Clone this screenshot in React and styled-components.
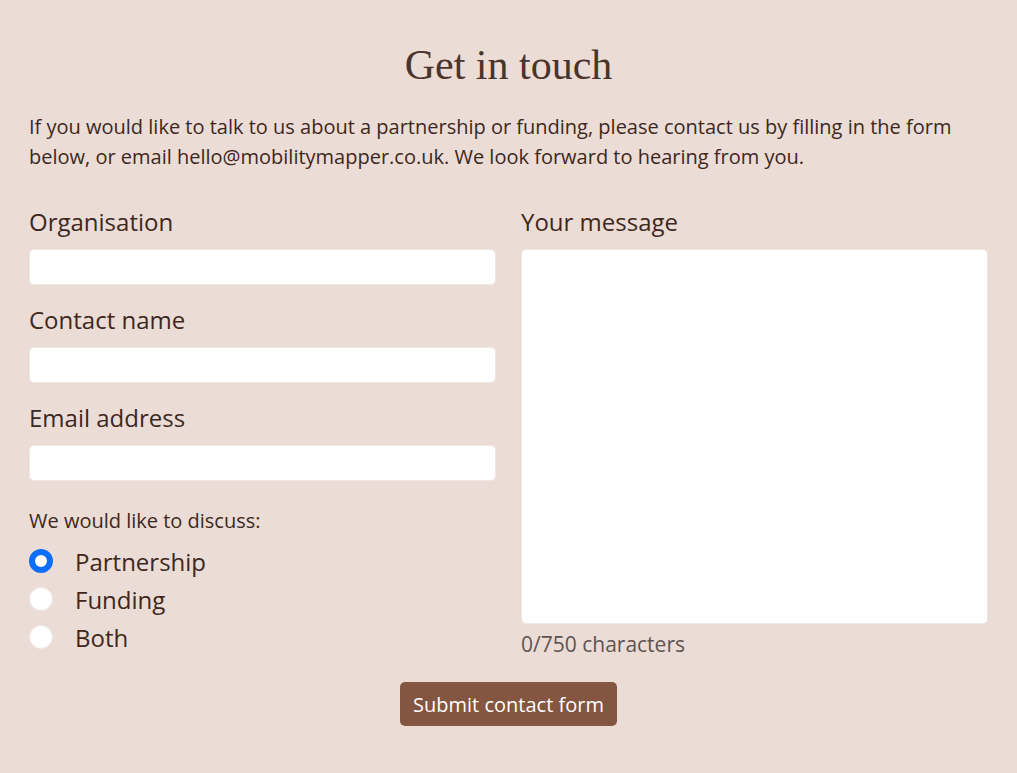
import React, { useState } from 'react';
import styled, { createGlobalStyle } from 'styled-components';

const GlobalStyle = createGlobalStyle`
  html, body {
    margin: 0;
    padding: 0;
    background: #ecdcd6;
  }
  * { box-sizing: border-box; }
`;

const Page = styled.main`
  min-height: 773px;
  padding: 41px 29px 40px;
  background: #ecdcd6;
  color: #3d2820;
  font-family: "Open Sans", "Liberation Sans", sans-serif;
`;

const Title = styled.h1`
  margin: 0 0 23px;
  font-family: "Liberation Serif", "DejaVu Serif", serif;
  font-weight: 400;
  font-size: 42px;
  line-height: 48px;
  text-align: center;
  color: #4a342b;
`;

const Intro = styled.p`
  margin: 0 0 35px;
  font-size: 20px;
  line-height: 30px;
`;

const Columns = styled.div`
  display: grid;
  grid-template-columns: 1fr 1fr;
  column-gap: 25px;
`;

const Column = styled.div`
  display: flex;
  flex-direction: column;
`;

const Field = styled.div`
  display: flex;
  flex-direction: column;
  gap: 12px;
  margin-bottom: ${p => (p.$last ? 0 : 20)}px;
`;

const Label = styled.label`
  font-size: 24px;
  line-height: 30px;
`;

const Input = styled.input`
  height: 36px;
  border: 1px solid #efe7e4;
  border-radius: 5px;
  background: #fff;
  padding: 0 12px;
  font: inherit;
  font-size: 18px;
`;

const TextArea = styled.textarea`
  height: 375px;
  border: 1px solid #efe7e4;
  border-radius: 5px;
  background: #fff;
  padding: 8px 12px;
  font: inherit;
  font-size: 18px;
  resize: none;
`;

const Legend = styled.div`
  margin-top: 7px;
  font-size: 20px;
  line-height: 26px;
  margin-bottom: 8px;
`;

const RadioRow = styled.label`
  display: flex;
  align-items: center;
  gap: 22px;
  height: 38px;
  font-size: 24px;
  cursor: pointer;
`;

const Radio = styled.input`
  appearance: none;
  margin: 0;
  width: 24px;
  height: 24px;
  border-radius: 50%;
  background: #fff;
  border: 1px solid #efe7e4;
  &:checked {
    background: #fff;
    border: 6.5px solid #0d6efd;
  }
`;

const Counter = styled.div`
  margin-top: 7px;
  font-size: 21px;
  line-height: 26px;
  color: #5e5350;
`;

const Actions = styled.div`
  display: flex;
  justify-content: center;
  margin-top: 25px;
`;

const Button = styled.button`
  height: 44px;
  padding: 0 13px;
  border: none;
  border-radius: 5px;
  background: #845540;
  color: #fff;
  font-family: "Open Sans", "Liberation Sans", sans-serif;
  font-size: 20px;
  cursor: pointer;
`;

const options = ['Partnership', 'Funding', 'Both'];

export default function App() {
  const [topic, setTopic] = useState('Partnership');
  const [message, setMessage] = useState('');

  return (
    <Page>
      <GlobalStyle />
      <Title>Get in touch</Title>
      <Intro>
        If you would like to talk to us about a partnership or funding, please contact us by filling in the form
        below, or email hello@mobilitymapper.co.uk. We look forward to hearing from you.
      </Intro>
      <Columns>
        <Column>
          <Field>
            <Label htmlFor="org">Organisation</Label>
            <Input id="org" />
          </Field>
          <Field>
            <Label htmlFor="name">Contact name</Label>
            <Input id="name" />
          </Field>
          <Field>
            <Label htmlFor="email">Email address</Label>
            <Input id="email" type="email" />
          </Field>
          <Legend>We would like to discuss:</Legend>
          {options.map(o => (
            <RadioRow key={o}>
              <Radio
                type="radio"
                name="topic"
                checked={topic === o}
                onChange={() => setTopic(o)}
              />
              {o}
            </RadioRow>
          ))}
        </Column>
        <Column>
          <Field $last>
            <Label htmlFor="msg">Your message</Label>
            <TextArea
              id="msg"
              maxLength={750}
              value={message}
              onChange={e => setMessage(e.target.value)}
            />
          </Field>
          <Counter>{message.length}/750 characters</Counter>
        </Column>
      </Columns>
      <Actions>
        <Button type="submit">Submit contact form</Button>
      </Actions>
    </Page>
  );
}
